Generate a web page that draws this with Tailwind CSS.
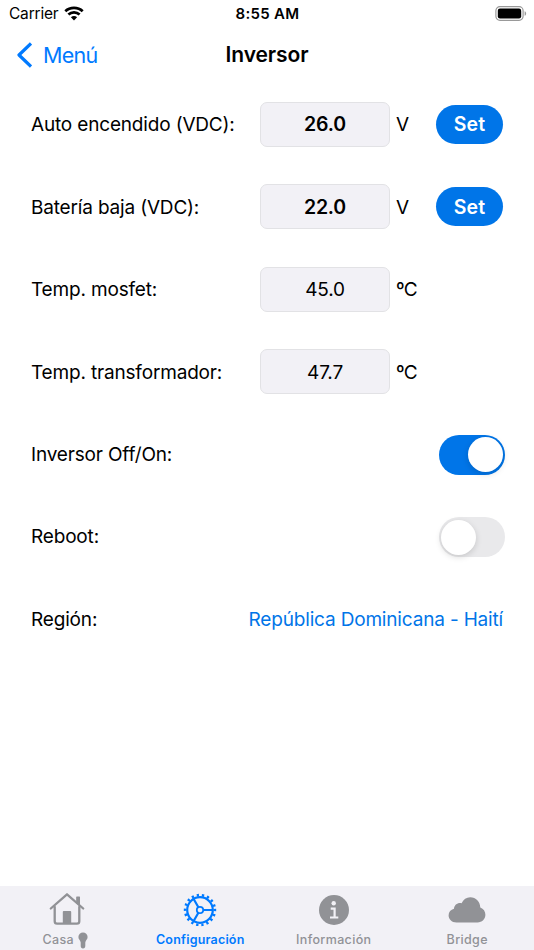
<!DOCTYPE html>
<html lang="es">
<head>
    <meta charset="UTF-8">
    <meta name="viewport" content="width=device-width, initial-scale=1.0">
    <title>Inversor</title>
    <script src="https://cdn.jsdelivr.net/npm/@tailwindcss/browser@4"></script>
</head>
<body class="flex flex-col w-[534px] h-[950px] overflow-hidden bg-white text-black font-['Inter','Liberation_Sans',sans-serif]">
    <!-- Status bar -->
    <div class="grid grid-cols-3 items-center h-[28px] pl-[9px] pr-[7px] shrink-0">
        <div class="flex items-center gap-[6px]">
            <span class="text-[15.5px] tracking-[-0.2px]">Carrier</span>
            <svg class="w-[20px] h-[15px] -mt-[2px]" viewBox="0 0 20 15" fill="none" stroke="#000" stroke-width="2.7">
                <path d="M1.3 5.3C6 .8 14 .8 18.7 5.3"/>
                <path d="M4.4 8.5C7.5 5.6 12.5 5.6 15.6 8.5"/>
                <path d="M10 14.4 6.9 11.3C8.6 9.7 11.4 9.7 13.1 11.3Z" fill="#000" stroke="none"/>
            </svg>
        </div>
        <span class="pr-[1px] pt-px text-center text-[15px] font-semibold tracking-[0.3px]">8:55 AM</span>
        <svg class="justify-self-end w-[32px] h-[15px] -mt-[2px]" viewBox="0 0 32 15">
            <rect x=".9" y=".7" width="27.2" height="13.6" rx="4" fill="none" stroke="#999" stroke-width="1.2"/>
            <rect x="2.8" y="2.6" width="23.4" height="9.8" rx="2.2"/>
            <path d="M29.6 5.2c2 .6 2 4 0 4.6z" fill="#999"/>
        </svg>
    </div>

    <!-- Nav bar -->
    <header class="grid grid-cols-3 items-center h-[54px] px-[16px] shrink-0">
        <a class="flex items-center gap-[11px] text-[#007aff]">
            <svg class="w-[16px] h-[26px] -mt-px" viewBox="0 0 16 26" fill="none" stroke="currentColor" stroke-width="3.2" stroke-linejoin="round">
                <path d="M15 1.5 3 13l12 11.5"/>
            </svg>
            <span class="text-[21.5px] tracking-[-0.7px]">Menú</span>
        </a>
        <h1 class="text-center text-[21px] font-semibold tracking-[-0.1px]">Inversor</h1>
    </header>

    <!-- Settings -->
    <main class="grid grid-rows-7 h-[578px] mt-[1px] shrink-0 pl-[31px] pr-[29px] text-[19px] tracking-[-0.17px]">
        <div class="flex items-center">
            <span class="w-[229px] pt-[1px]">Auto encendido (VDC):</span>
            <div class="flex items-center justify-center w-[130px] h-[45px] pt-[1px] rounded-[7px] border border-[#e2e2e5] bg-[#f2f1f6] text-[19.5px] font-semibold">26.0</div>
            <span class="w-[46px] pl-[6px] pt-[1px]">V</span>
            <button class="w-[67px] h-[39px] pt-[1px] rounded-full bg-[#0075e8] text-white text-[19.5px] font-semibold tracking-[0.1px]">Set</button>
        </div>
        <div class="flex items-center">
            <span class="w-[229px] pt-[2px]">Batería baja (VDC):</span>
            <div class="flex items-center justify-center w-[130px] h-[45px] pt-[2px] rounded-[7px] border border-[#e2e2e5] bg-[#f2f1f6] text-[19.5px] font-semibold">22.0</div>
            <span class="w-[46px] pl-[6px] pt-[2px]">V</span>
            <button class="w-[67px] h-[39px] pt-[2px] rounded-full bg-[#0075e8] text-white text-[19.5px] font-semibold tracking-[0.1px]">Set</button>
        </div>
        <div class="flex items-center">
            <span class="w-[229px] pt-[1px]">Temp. mosfet:</span>
            <div class="flex items-center justify-center w-[130px] h-[45px] pt-[1px] rounded-[7px] border border-[#e2e2e5] bg-[#f2f1f6]">45.0</div>
            <span class="w-[46px] pl-[6px] pt-[1px] tracking-[-0.8px]">ºC</span>
        </div>
        <div class="flex items-center">
            <span class="w-[229px] pt-[2px]">Temp. transformador:</span>
            <div class="flex items-center justify-center w-[130px] h-[45px] pt-[2px] rounded-[7px] border border-[#e2e2e5] bg-[#f2f1f6]">47.7</div>
            <span class="w-[46px] pl-[6px] pt-[2px] tracking-[-0.8px]">ºC</span>
        </div>
        <div class="flex items-center justify-between">
            <span class="pt-[2px]">Inversor Off/On:</span>
            <div class="flex items-center justify-end w-[66px] h-[40px] p-[2.5px] rounded-full bg-[#0075e8]">
                <div class="size-[35px] rounded-full bg-white shadow-[0_2px_6px_rgba(0,0,0,0.15)]"></div>
            </div>
        </div>
        <div class="flex items-center justify-between">
            <span class="pt-[1px]">Reboot:</span>
            <div class="flex items-center w-[66px] h-[40px] p-[2px] rounded-full bg-[#e9e9eb]">
                <div class="size-[35px] rounded-full bg-white shadow-[0_2px_6px_rgba(0,0,0,0.15)]"></div>
            </div>
        </div>
        <div class="flex items-center justify-between">
            <span class="pt-[1px]">Región:</span>
            <span class="pr-[2px] pt-[1px] text-[#0075e8]">República Dominicana - Haití</span>
        </div>
    </main>

    <!-- Tab bar -->
    <nav class="grid grid-cols-4 mt-auto h-[64px] shrink-0 bg-[#f2f1f6] text-[#919296] text-[12.5px] font-medium">
        <a class="flex flex-col items-center pt-[6px]">
            <svg class="w-[36px] h-[34px]" viewBox="0 0 36 34" fill="none" stroke="currentColor" stroke-width="2.3" stroke-linecap="round" stroke-linejoin="round">
                <path d="M1.8 16.5 18 2.3l16.2 14.2"/>
                <path d="M5.7 15v14.2c0 1.6.8 2.4 2.4 2.4h19.8c1.6 0 2.4-.8 2.4-2.4V15"/>
                <path d="M27.8 5h2.6v8l-2.6-2.3z" fill="currentColor" stroke-width="1.2"/>
                <path d="M14.7 20h6.6v11h-6.6z" fill="currentColor" stroke-width="1.8"/>
            </svg>
            <span class="flex items-center gap-[4px] h-[16px] mt-[6px] -ml-[3px] tracking-[0.3px]">Casa
                <svg class="w-[10px] h-[17px]" viewBox="0 0 10 17" fill="currentColor">
                    <path d="M5 .5A4.6 4.6 0 0 0 .4 5c0 2.6 2 3.2 2.3 5.4v3.4a2.3 2.7 0 0 0 4.600 0v-3.400C7.600 8.200 9.600 7.600 9.600 5A4.600 4.600 0 0 0 5 .5z"/>
                </svg>
            </span>
        </a>
        <a class="flex flex-col items-center pt-[6px] text-[#007aff]">
            <svg class="w-[36px] h-[36px]" viewBox="-18 -18 36 36" fill="none" stroke="currentColor" stroke-width="2.2">
                <circle r="12.8"/>
                <circle r="14.9" stroke-width="2.6" stroke-dasharray="2.3 2.901" transform="rotate(-4.5)"/>
                <circle r="3.2" stroke-width="1.8"/>
                <path d="M3.2 0h9.700M-1.600-2.800-6.500-11.200M-1.600 2.800-6.500 11.200"/>
            </svg>
            <span class="h-[16px] mt-[4px] leading-[16px] font-semibold tracking-[0.2px]">Configuración</span>
        </a>
        <a class="flex flex-col items-center pt-[6px]">
            <svg class="w-[36px] h-[36px]" viewBox="-18 -18 36 36">
                <circle r="15" fill="currentColor"/>
                <circle cx="-.3" cy="-6.8" r="2.2" fill="#f2f1f6"/>
                <path d="M-3.3-1.4H.6V7.5M-4 7.5H4.3" fill="none" stroke="#f2f1f6" stroke-width="2.2"/>
            </svg>
            <span class="h-[16px] mt-[4px] leading-[16px] tracking-[0.35px]">Información</span>
        </a>
        <a class="flex flex-col items-center pt-[6px]">
            <svg class="w-[38px] h-[36px]" viewBox="0 0 38 36" fill="currentColor">
                <path d="M8.5 30.5C3.6 30.5.6 27.2.6 23.3c0-3.500 2.200-5.700 5.400-6.600.2-3.800 3.800-6.400 7.600-5.500C15.300 7.400 18.500 5.300 22.200 5.300c5.700 0 10 4.400 10.100 10.300 3.200 1.200 5.100 4 5.100 7.200 0 4.400-3.400 7.700-7.900 7.700z"/>
            </svg>
            <span class="h-[16px] mt-[4px] leading-[16px] tracking-[0.35px]">Bridge</span>
        </a>
    </nav>
</body>
</html>
